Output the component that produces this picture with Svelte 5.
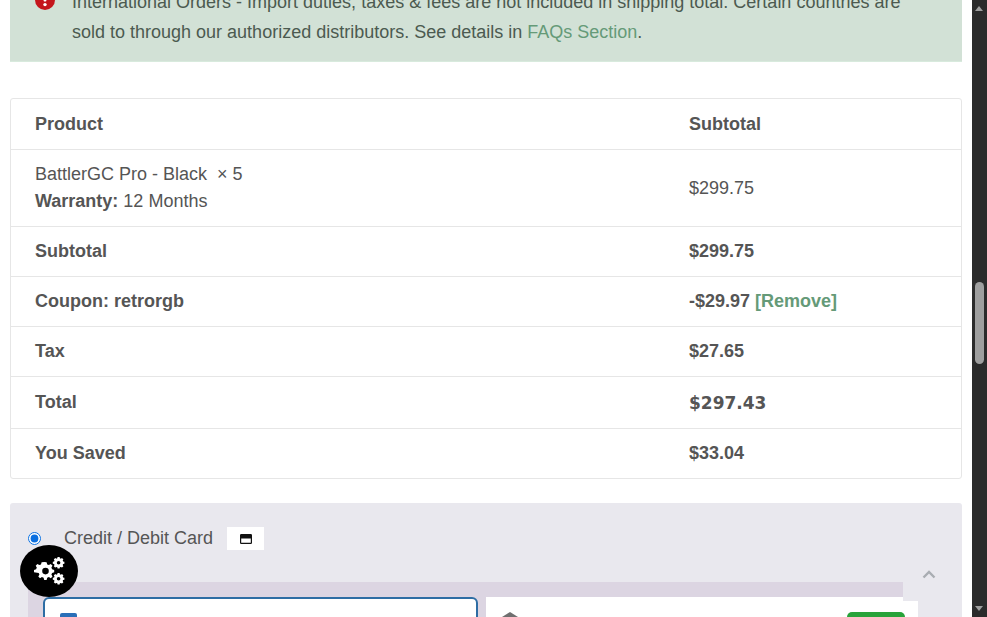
<script lang="ts">
  interface Row { label: string; value: string; cls?: string }
  const rows: Row[] = [
    { label: 'Subtotal', value: '$299.75' },
    { label: 'Coupon: retrorgb', value: '-$29.97' , cls: 'coupon' },
    { label: 'Tax', value: '$27.65', cls: 'tax' },
    { label: 'Total', value: '$297.43', cls: 'total' },
    { label: 'You Saved', value: '$33.04', cls: 'saved' }
  ]
</script>

<div class="window">
  <main class="page">
    <div class="alert">
      <svg class="alert-icon" viewBox="0 0 20 20" width="20" height="20" aria-hidden="true">
        <circle cx="10" cy="10" r="10" fill="#c4161c" />
        <rect x="8.6" y="3.5" width="2.8" height="8" rx="1" fill="#fff" />
        <circle cx="10" cy="14.6" r="1.7" fill="#fff" />
      </svg>
      <p>International Orders - Import duties, taxes &amp; fees are not included in shipping total. Certain countries are sold to through our authorized distributors. See details in <a href="#faq">FAQs Section</a>.</p>
    </div>

    <section class="order">
      <div class="row head">
        <div class="c1">Product</div>
        <div class="c2">Subtotal</div>
      </div>
      <div class="row item">
        <div class="c1">
          <div>BattlerGC Pro - Black&nbsp; × 5</div>
          <div><b>Warranty:</b> 12 Months</div>
        </div>
        <div class="c2 plain">$299.75</div>
      </div>
      {#each rows as row}
        <div class="row {row.cls ?? ''}">
          <div class="c1">{row.label}</div>
          <div class="c2">
            {row.value}
            {#if row.cls === 'coupon'}<a href="#remove">[Remove]</a>{/if}
          </div>
        </div>
      {/each}
    </section>

    <section class="payment">
      <label class="method">
        <input type="radio" name="pay" checked />
        <span class="method-name">Credit / Debit Card</span>
        <span class="card-badge">
          <svg viewBox="0 0 12 10" width="12" height="10" aria-hidden="true">
            <path d="M0 1.2A1.2 1.2 0 0 1 1.2 0h9.6A1.2 1.2 0 0 1 12 1.2v7.6A1.2 1.2 0 0 1 10.800 10H1.200A1.200 1.200 0 0 1 0 8.800zM1.200 4.500v4.300h9.600V4.500z" fill="#111" />
          </svg>
        </span>
      </label>

      <div class="band">
        <div class="cards">
          <div class="card active"><span class="check"></span></div>
          <div class="card">
            <svg class="home" viewBox="0 0 18 10" width="18" height="10" aria-hidden="true">
              <path d="M9 0l8 5v5H1V5z" fill="#6f6f6f" />
            </svg>
            <span class="tag"></span>
          </div>
        </div>
      </div>
    </section>
  </main>

  <aside class="scrollbar">
    <span class="arrow up"></span>
    <span class="thumb"></span>
    <span class="arrow down"></span>
  </aside>

  <button class="settings" aria-label="Settings">
    <svg viewBox="0 0 32 32" width="32" height="32" aria-hidden="true">
      <g fill="#fff">
        <path d="M11.400 7l2.200.300.600 2.100 1.700.700 1.900-1.100 1.700 1.700-1.100 1.900.700 1.700 2.100.600v2.400l-2.100.600-.700 1.700 1.100 1.900-1.700 1.700-1.900-1.100-1.700.700-.600 2.100h-2.400l-.600-2.100-1.700-.700-1.900 1.100-1.700-1.700 1.100-1.900-.700-1.700L1 17.300v-2.400l2.100-.600.700-1.700-1.100-1.900 1.700-1.700 1.900 1.100 1.700-.700.600-2.100zM12.500 12.800a3.300 3.300 0 1 0 0 6.600 3.300 3.300 0 0 0 0-6.600z" fill-rule="evenodd" />
        <path id="g2" d="M24.600 2h2l.300 1.300.900.400 1.200-.700 1.400 1.400-.700 1.200.400.900 1.300.300v2l-1.300.300-.400.900.700 1.200-1.400 1.400-1.200-.700-.900.400-.300 1.300h-2l-.300-1.300-.900-.400-1.200.700-1.400-1.400.700-1.200-.400-.900-1.300-.300v-2l1.300-.300.400-.900-.700-1.200 1.400-1.400 1.200.700.900-.400zM25.600 6a1.800 1.800 0 1 0 0 3.600 1.800 1.800 0 0 0 0-3.600z" fill-rule="evenodd" />
        <path d="M24.600 18h2l.300 1.300.900.400 1.200-.700 1.400 1.400-.700 1.200.400.900 1.300.300v2l-1.300.300-.400.900.700 1.200-1.400 1.400-1.200-.700-.900.400-.300 1.300h-2l-.300-1.300-.900-.400-1.200.700-1.400-1.400.700-1.200-.400-.900-1.300-.300v-2l1.300-.300.400-.900-.700-1.200 1.400-1.400 1.200.700.900-.400zM25.600 22a1.800 1.800 0 1 0 0 3.600 1.800 1.800 0 0 0 0-3.600z" fill-rule="evenodd" />
      </g>
    </svg>
  </button>

  <button class="to-top" aria-label="Back to top">
    <svg viewBox="0 0 14 9" width="14" height="9" aria-hidden="true">
      <path d="M1.500 7.500L7 2l5.500 5.500" fill="none" stroke="#a9adb2" stroke-width="2.400" />
    </svg>
  </button>
</div>

<style>
  :global(body) {
    margin: 0;
    background: #fff;
  }

  .window {
    position: relative;
    display: flex;
    width: 987px;
    height: 617px;
    overflow: hidden;
    font-family: "Liberation Sans", Arial, sans-serif;
    font-size: 18px;
    color: #555;
  }

  .page {
    flex: 1;
    min-width: 0;
    padding: 0 10px;
    margin-top: -33px;
  }

  .alert {
    display: flex;
    gap: 17px;
    padding: 20px 25px 19px;
    background: #d2e1d6;
    border-bottom: 1px solid #d8eadd;
    box-sizing: border-box;
    height: 95px;
    color: #4c5a50;
  }

  .alert-icon { flex: none; margin-top: 3px; }

  .alert p {
    margin: 0;
    line-height: 30px;
  }

  .alert a { color: #659a78; text-decoration: none; }

  .order {
    margin-top: 36px;
    border: 1px solid #e6e6e6;
    border-radius: 3px;
  }

  .row {
    display: grid;
    grid-template-columns: 654px 1fr;
    align-items: center;
    height: 50px;
    padding-left: 24px;
    border-top: 1px solid #e6e6e6;
    font-weight: 700;
    box-sizing: border-box;
  }

  .row.head { border-top: 0; height: 50px; }
  .row.item { height: 77px; font-weight: 400; line-height: 27px; }
  .row.coupon, .row.tax { height: 50px; }
  .row.total { height: 52px; }
  .row.saved { height: 50px; }
  .row .plain { font-weight: 400; }
  .row.total .c2 { font-family: "DejaVu Sans", sans-serif; font-size: 17px; letter-spacing: 0; }
  .row a { color: #659a78; text-decoration: none; }

  .payment {
    margin-top: 24px;
    padding: 24px 18px 0;
    height: 200px;
    background: #e9e8ee;
    border-radius: 3px;
  }

  .method {
    display: flex;
    align-items: center;
    height: 23px;
  }

  .method input {
    width: 13px;
    height: 13px;
    margin: 0 0 0 0;
    accent-color: #0a6fe0;
  }

  .method-name { margin-left: 23px; }

  .card-badge {
    display: flex;
    align-items: center;
    justify-content: center;
    margin-left: 14px;
    width: 37px;
    height: 23px;
    background: #fff;
  }

  .band {
    margin-top: 32px;
    width: 875px;
    height: 200px;
    background: #dcd5e2;
    padding-top: 15px;
    box-sizing: border-box;
  }

  .cards {
    display: flex;
    gap: 8px;
    margin-left: 15px;
    width: 875px;
  }

  .card {
    position: relative;
    width: 432px;
    height: 120px;
    background: #fff;
    box-sizing: border-box;
  }

  .card.active {
    width: 435px;
    border: 2px solid #2e6da4;
    border-radius: 6px;
  }

  .check {
    position: absolute;
    left: 15px;
    top: 14px;
    width: 17px;
    height: 17px;
    background: #2a6fb8;
    border-radius: 2px;
  }

  .home { position: absolute; left: 15px; top: 15px; }

  .tag {
    position: absolute;
    right: 13px;
    top: 15px;
    width: 58px;
    height: 24px;
    background: #28a33a;
    border-radius: 5px;
  }

  .scrollbar {
    position: relative;
    flex: none;
    width: 15px;
    background: #2b2b2b;
  }

  .thumb {
    position: absolute;
    left: 3px;
    top: 282px;
    width: 9px;
    height: 82px;
    background: #9f9f9f;
    border-radius: 5px;
  }

  .arrow {
    position: absolute;
    left: 3px;
    width: 0;
    height: 0;
    border-left: 4.5px solid transparent;
    border-right: 4.5px solid transparent;
  }

  .arrow.up { top: 6px; border-bottom: 5px solid #9f9f9f; }
  .arrow.down { bottom: 6px; border-top: 5px solid #9f9f9f; }

  .settings {
    position: absolute;
    left: 20px;
    top: 545px;
    display: flex;
    align-items: center;
    justify-content: center;
    width: 58px;
    height: 52px;
    padding: 0;
    border: 0;
    border-radius: 50%;
    background: #000;
  }

  .to-top {
    position: absolute;
    left: 903px;
    top: 547px;
    width: 52px;
    height: 54px;
    padding: 0;
    border: 0;
    background: #e9e8ee;
  }
</style>
